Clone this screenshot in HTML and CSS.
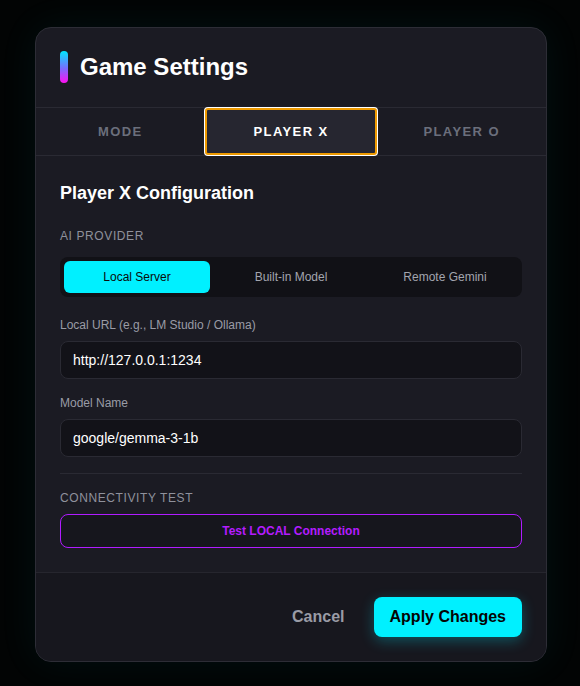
FILE: index.html
```html
<!DOCTYPE html>
<html>
<head>
<meta charset="utf-8">
<link rel="stylesheet" href="styles.css">
</head>
<body>
<div class="stage">
  <div class="modal">
    <div class="header">
      <span class="accent"></span>
      <h1 class="title">Game Settings</h1>
    </div>
    <div class="tabs">
      <div class="tab">MODE</div>
      <div class="tab active">PLAYER X</div>
      <div class="tab">PLAYER O</div>
    </div>
    <div class="body">
      <h2 class="section-title">Player X Configuration</h2>
      <div class="caps-label">AI PROVIDER</div>
      <div class="segment">
        <div class="seg-btn on">Local Server</div>
        <div class="seg-btn">Built-in Model</div>
        <div class="seg-btn">Remote Gemini</div>
      </div>
      <div class="field">
        <div class="field-label">Local URL (e.g., LM Studio / Ollama)</div>
        <div class="input">http://127.0.0.1:1234</div>
      </div>
      <div class="field last">
        <div class="field-label">Model Name</div>
        <div class="input">google/gemma-3-1b</div>
      </div>
      <div class="divider"></div>
      <div class="caps-label conn">CONNECTIVITY TEST</div>
      <div class="test-btn">Test LOCAL Connection</div>
    </div>
    <div class="footer">
      <div class="cancel">Cancel</div>
      <div class="apply">Apply Changes</div>
    </div>
  </div>
</div>
</body>
</html>
```

FILE: styles.css
```css
* { box-sizing: border-box; }
html, body {
  margin: 0;
  padding: 0;
  background: #000;
  font-family: "Liberation Sans", Arial, sans-serif;
}
.stage {
  width: 580px;
  height: 686px;
  display: flex;
  align-items: flex-start;
  justify-content: center;
  padding-top: 27px;
  background: #020404;
}
.modal {
  width: 512px;
  background: #1b1b23;
  border: 1px solid #2d2d36;
  border-radius: 16px;
  box-shadow: 0 0 40px rgba(0, 200, 210, 0.07);
  overflow: hidden;
  margin-left: 2px;
}
.header {
  display: flex;
  align-items: center;
  gap: 12px;
  padding: 23px 24px 24px 24px;
  border-bottom: 1px solid #2a2a33;
}
.accent {
  width: 8px;
  height: 32px;
  border-radius: 4px;
  background: linear-gradient(180deg, #00e8ff 0%, #7a6bff 55%, #ff10f0 100%);
}
.title {
  margin: 0;
  font-size: 24px;
  font-weight: 700;
  color: #ffffff;
  line-height: 32px;
}
.tabs {
  display: flex;
  border-bottom: 1px solid #2a2a33;
}
.tab {
  flex: 1;
  height: 47px;
  display: flex;
  align-items: center;
  justify-content: center;
  font-size: 13px;
  font-weight: 700;
  letter-spacing: 1.4px;
  color: #6b6f7c;
}
.tab.active {
  color: #ffffff;
  background: #262630;
  border: 2px solid #ee9a00;
  border-radius: 3px;
  box-shadow: 0 0 0 1px #ffffff;
  position: relative;
}
.body {
  padding: 24px 24px 24px 24px;
  border-bottom: 1px solid #26262e;
}
.section-title {
  margin: 0 0 19px 0;
  font-size: 18px;
  font-weight: 700;
  color: #ffffff;
  line-height: 27px;
}
.caps-label {
  font-size: 12px;
  line-height: 20px;
  color: #8f919c;
  letter-spacing: 0.6px;
  margin-bottom: 11px;
}
.caps-label.conn {
  margin-bottom: 6px;
  margin-top: 14px;
}
.segment {
  display: flex;
  gap: 8px;
  padding: 4px;
  background: #111116;
  border-radius: 8px;
  margin-bottom: 19px;
}
.seg-btn {
  flex: 1;
  height: 32px;
  display: flex;
  align-items: center;
  justify-content: center;
  font-size: 12px;
  color: #a3a5ae;
  border-radius: 6px;
}
.seg-btn.on {
  background: #00f0ff;
  color: #0a0a0a;
}
.field { margin-bottom: 15px; }
.field.last { margin-bottom: 16px; }
.field-label {
  font-size: 12px;
  line-height: 18px;
  color: #9a9ca6;
  margin-bottom: 7px;
}
.input {
  height: 38px;
  display: flex;
  align-items: center;
  padding: 0 12px;
  background: #121218;
  border: 1px solid #2a2a33;
  border-radius: 8px;
  font-size: 14px;
  color: #ffffff;
}
.divider {
  height: 1px;
  background: #2a2a33;
}
.test-btn {
  height: 34px;
  display: flex;
  align-items: center;
  justify-content: center;
  border: 1px solid #b01cff;
  border-radius: 8px;
  background: #16161d;
  color: #b41cff;
  font-size: 12px;
  font-weight: 700;
}
.footer {
  display: flex;
  justify-content: flex-end;
  align-items: center;
  gap: 29px;
  padding: 24px 24px 24px 24px;
  background: #17171e;
}
.cancel {
  font-size: 16px;
  font-weight: 700;
  color: #9a9ca6;
}
.apply {
  height: 40px;
  padding: 0 16px;
  display: flex;
  align-items: center;
  background: #00f0ff;
  border-radius: 8px;
  color: #050505;
  font-size: 16px;
  font-weight: 700;
  box-shadow: 0 4px 14px rgba(0, 220, 240, 0.3);
}
```
